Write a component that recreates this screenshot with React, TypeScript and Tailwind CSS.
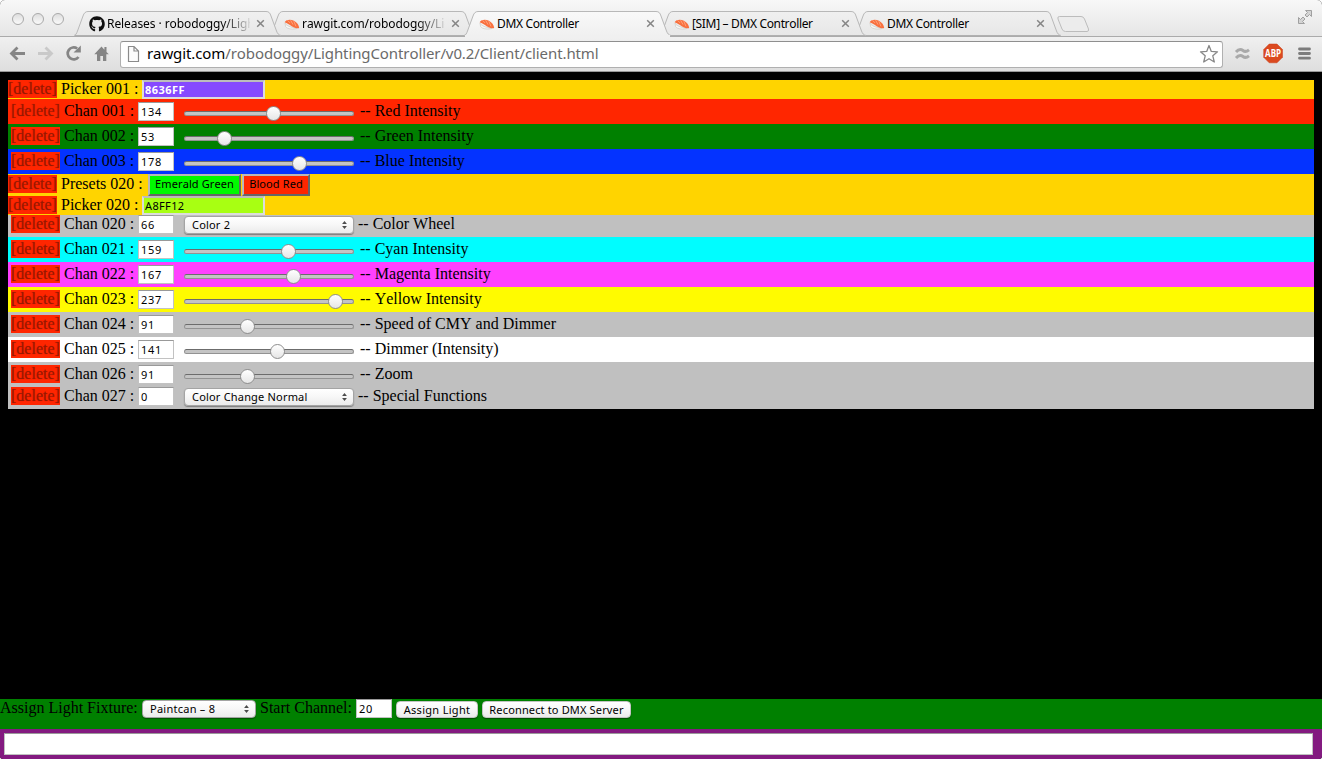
import React from "react";
import { FaGithub } from "react-icons/fa";

const SANS = "font-['Noto_Sans',sans-serif]";

function Sushi() {
  return (
    <svg width="16" height="16" viewBox="0 0 16 16" className="shrink-0">
      <path d="M1 7.2 C2.5 9.5 6 11.5 13.2 12.4 C11 13.4 3 13.5 1.6 10.5 Z" fill="#f7f7f4" stroke="#c4c4c0" strokeWidth=".6" />
      <path d="M0.6 6.2 C2 3.6 6.5 3 10 4.8 C13 6.4 14.8 9 15.2 12 C12 12.8 8.5 11 6 9 C4.2 7.8 2.6 7 0.6 6.2 Z" fill="#f9703e" />
      <path d="M3.6 4.4 L6 6.9 M6.6 4.2 L9 8.6 M9.8 5.2 L12 10.4" stroke="#ffb795" strokeWidth=".7" fill="none" />
    </svg>
  );
}

type TabProps = { title: string; active?: boolean; github?: boolean; fade?: boolean; z: string; spacing: string };

function Tab({ title, active, github, fade, z, spacing }: TabProps) {
  return (
    <div className={`relative ${z} -mr-[12px] h-[25px] w-[207px] shrink-0`}>
      <svg width="207" height="26" viewBox="0 0 207 26" className="absolute left-0 top-0">
        <defs>
          <linearGradient id="tabfill" x1="0" y1="0" x2="0" y2="1">
            <stop offset="0" stopColor="#f0f0f0" />
            <stop offset="1" stopColor="#e7e7e7" />
          </linearGradient>
          <linearGradient id="tabactive" x1="0" y1="0" x2="0" y2="1">
            <stop offset="0" stopColor="#f9f9f9" />
            <stop offset="1" stopColor="#f0f0f0" />
          </linearGradient>
        </defs>
        <path
          d="M0 24.5 C2 24 2.5 22.5 3.5 20 L9 5 C10 2 11.5 0.5 14 0.5 H192 C195 0.5 196 2 197 5 L202.5 20 C203.5 22.5 204.5 24 207 24.5"
          fill={active ? "url(#tabactive)" : "url(#tabfill)"}
          stroke="#b8b8b8"
        />
        <path d="M1 25 H206" stroke={active ? "#f0f0f0" : "#b0b0b0"} strokeWidth={active ? 2 : 1} transform={active ? "" : "translate(0,-0.5)"} />
      </svg>
      <div className="relative flex h-[25px] items-center pl-[15px]">
        {github ? <FaGithub size={16} color="#111" className="shrink-0" /> : <Sushi />}
        <div className={`ml-[2px] h-[20px] w-[143px] whitespace-nowrap text-[12px] leading-[20px] text-black ${spacing} ${SANS} ${fade ? "[mask-image:linear-gradient(to_right,#000_115px,transparent_146px)]" : ""}`}>
          {title}
        </div>
        <svg width="9" height="9" viewBox="0 0 9 9" className="ml-[6px]">
          <path d="M1.2 1.2 L7.8 7.8 M7.8 1.2 L1.2 7.8" stroke="#858585" strokeWidth="1.5" />
        </svg>
      </div>
    </div>
  );
}

function BrowserChrome() {
  return (
    <header className="h-[72px]">
      <div className="flex h-[36px] bg-linear-to-b from-[#f8f8f8] to-[#e6e6e6] pt-[11px]">
        <div className="flex w-[74px] gap-[8px] pl-[12px] pt-[2px]">
          {[0, 1, 2].map((i) => (
            <span key={i} className="size-[12px] rounded-full border border-[#a9a9a9] bg-linear-to-b from-[#dedede] to-[#fafafa]" />
          ))}
        </div>
        <Tab title="Releases · robodoggy/Ligh" github fade z="z-[3]" spacing="tracking-[-0.08px]" />
        <Tab title="rawgit.com/robodoggy/Lig" fade z="z-[2]" spacing="tracking-[-0.08px]" />
        <Tab title="DMX Controller" active z="z-[5]" spacing="tracking-[-0.34px]" />
        <Tab title="[SIM] – DMX Controller" z="z-[3]" spacing="tracking-[-0.34px]" />
        <Tab title="DMX Controller" z="z-[2]" spacing="tracking-[-0.34px]" />
        <svg width="34" height="18" viewBox="0 0 34 18" className="ml-[7px] mt-[4px]">
          <path d="M3.5 1.5 H25 Q27.5 1.5 28.5 4 L32.5 14 Q33 16.5 31 16.5 H9.5 Q7 16.5 6 14 L2 4 Q1.2 1.5 3.5 1.5 Z" fill="#ececec" stroke="#bcbcbc" />
        </svg>
        <svg width="16" height="16" viewBox="0 0 16 16" className="ml-auto mr-[9px] -mt-[2px]">
          <path d="M8.5 1.5 H14.5 V7.5 L12.5 5.5 L10 8 L8 6 L10.5 3.5 Z M1.5 8.5 L3.5 10.5 L6 8 L8 10 L5.5 12.5 L7.5 14.5 H1.5 Z" fill="#d4d4d4" stroke="#a0a0a0" strokeWidth="1" />
        </svg>
      </div>
      <div className="flex h-[36px] items-center border-y border-t-[#ababab] border-b-[#989898] bg-linear-to-b from-[#f0f0f0] to-[#dedede]">
        <svg width="120" height="34" viewBox="0 0 120 34" fill="none">
          <path d="M25 16.5 H12 M17.5 10.5 L11.5 16.5 L17.5 22.5" stroke="#858585" strokeWidth="2.8" />
          <path d="M38 16.5 H51 M45.5 10.5 L51.5 16.5 L45.5 22.5" stroke="#c9c9c9" strokeWidth="2.8" />
          <path d="M78.5 20 A6 6 0 1 1 77.2 11.5" stroke="#858585" strokeWidth="2.7" />
          <path d="M80.8 8.5 V15.5 H73.5 Z" fill="#858585" />
          <path d="M101.5 9.5 L94.3 17.3 H97 V24 H100.3 V19 H103 V24 H106.3 V17.3 H108.8 L106.5 15 V10 H104.4 V12.7 Z" fill="#858585" />
        </svg>
        <div className="flex h-[27px] w-[1103px] items-center rounded-[3px] border border-[#b0b0b0] border-t-[#8f8f8f] bg-white">
          <svg width="26" height="24" viewBox="0 0 26 24">
            <path d="M7.5 4.5 H13 L17.5 9 V19.5 H7.5 Z M13 4.5 V9 H17.5" fill="#fcfcfc" stroke="#8b8b8b" strokeWidth="1.2" />
          </svg>
          <div className={`flex-1 -mt-[2px] whitespace-nowrap text-[15px] tracking-[-0.1px] text-[#6a6a6a] ${SANS}`}>
            <span className="text-black">rawgit.com</span>/robodoggy/LightingController/v0.2/Client/client.html
          </div>
          <svg width="20" height="20" viewBox="0 0 20 20" className="mr-[3px]">
            <path d="M10 1.5 L12.3 7.4 L18.5 7.8 L13.8 11.8 L15.3 18 L10 14.7 L4.7 18 L6.2 11.8 L1.5 7.8 L7.7 7.4 Z" fill="#fff" stroke="#888" strokeWidth="1.3" strokeLinejoin="round" />
          </svg>
        </div>
        <svg width="99" height="34" viewBox="0 0 99 34">
          <path d="M13 15 C16 11.5 18 12 20 13.5 C22 15 23.5 14.8 26 12.8 M13 21 C16 17.5 18 18 20 19.5 C22 21 23.5 20.8 26 18.8" fill="none" stroke="#a9a9a9" strokeWidth="3" />
          <path d="M46.2 7 H54 L59.5 12.5 V20.3 L54 25.8 H46.2 L40.7 20.3 V12.5 Z" fill="#db4a20" stroke="#c93f18" strokeWidth=".5" />
          <text x="50.1" y="20.2" textAnchor="middle" textLength="16" lengthAdjust="spacingAndGlyphs" className="font-['Open_Sans',sans-serif] text-[10.5px] font-bold" fill="#fff">ABP</text>
          <path d="M76.5 12 H86.5 M76.5 16.5 H86.5 M76.5 21.2 H86.5" stroke="#7c7c7c" strokeWidth="2.8" strokeLinecap="round" />
        </svg>
      </div>
    </header>
  );
}

function Delete() {
  return <span className="h-[18px] w-[49px] shrink-0 bg-[#ff2600] leading-[18px] text-[#961800] [text-shadow:0_0_1px_rgba(143,21,0,.45)]">[delete]</span>;
}

function NumberBox({ value }: { value: string }) {
  return (
    <span className={`flex h-[19px] w-[36px] shrink-0 items-center border border-[#c2c2c2] border-t-[#999] bg-white pl-[2px] pt-[2px] text-[11px] tracking-[0.7px] text-black ${SANS}`}>
      {value}
    </span>
  );
}

function Select({ label, width }: { label: string; width: string }) {
  return (
    <span className={`flex shrink-0 items-center justify-between rounded-[4px] border border-[#a4a4a4] bg-linear-to-b from-white via-[#f7f7f7] to-[#ebebeb] pl-[7px] pr-[5px] text-[11px] leading-[14px] text-black shadow-[0_1px_1px_rgba(0,0,0,.35)] ${width} ${SANS}`}>
      {label}
      <svg width="7" height="10" viewBox="0 0 7 10">
        <path d="M3.5 1 L5.9 4 H1.1 Z M3.5 9 L5.9 6 H1.1 Z" fill="#4c4c4c" />
      </svg>
    </span>
  );
}

function Slider({ value }: { value: number }) {
  return (
    <span className="relative mt-[9px] h-[5px] w-[170px] shrink-0 rounded-[3px] border border-[#929292] border-t-[#6c6c6c] bg-[#c4c4c4]">
      <span
        className="absolute -top-[6px] size-[15px] rounded-full border border-[#8e8e8e] bg-linear-to-b from-white to-[#e6e6e6]"
        style={{ left: (155 * value) / 255 - 0.7 }}
      />
    </span>
  );
}

type Channel = { id: string; value: number; name: string; bg: string; option?: string };

function ChannelRow({ id, value, name, bg, option }: Channel) {
  return (
    <div className={`flex items-start pl-[3px] ${bg} ${option ? "h-[22px]" : "h-[25px] pt-[3px]"}`}>
      <Delete />
      <span className="w-[78px] shrink-0 pl-[4px] leading-[18px]">Chan {id} :</span>
      <NumberBox value={String(value)} />
      <span className="w-[10px] shrink-0" />
      {option ? (
        <span className="mt-[1px] flex tracking-[0.19px]"><Select label={option} width="h-[18px] w-[170px]" /></span>
      ) : (
        <Slider value={value} />
      )}
      <span className={`leading-[18px] ${option ? "pl-[4px]" : "pl-[6px]"}`}>-- {name}</span>
    </div>
  );
}

function PickerRow({ id, hex, color }: { id: string; hex: string; color: string }) {
  return (
    <div className="flex h-[19px] items-start bg-[#ffd400]">
      <Delete />
      <span className="w-[85px] shrink-0 pl-[4px] leading-[18px]">Picker {id} :</span>
      <span className={`flex h-[19px] w-[123px] items-center border-2 border-[#dcdcdc] border-t-[#bcbcbc] pl-[1px] pt-[2px] text-[11px] ${color} ${SANS}`}>{hex}</span>
    </div>
  );
}

const first: Channel[] = [
  { id: "001", value: 134, name: "Red Intensity", bg: "bg-[#ff2600]" },
  { id: "002", value: 53, name: "Green Intensity", bg: "bg-[#008000]" },
  { id: "003", value: 178, name: "Blue Intensity", bg: "bg-[#0433ff]" },
];

const second: Channel[] = [
  { id: "020", value: 66, name: "Color Wheel", bg: "bg-[#c0c0c0]", option: "Color 2" },
  { id: "021", value: 159, name: "Cyan Intensity", bg: "bg-[#00fdff]" },
  { id: "022", value: 167, name: "Magenta Intensity", bg: "bg-[#ff40ff]" },
  { id: "023", value: 237, name: "Yellow Intensity", bg: "bg-[#fffb00]" },
  { id: "024", value: 91, name: "Speed of CMY and Dimmer", bg: "bg-[#c0c0c0]" },
  { id: "025", value: 141, name: "Dimmer (Intensity)", bg: "bg-white" },
  { id: "026", value: 91, name: "Zoom", bg: "bg-[#c0c0c0]" },
  { id: "027", value: 0, name: "Special Functions", bg: "bg-[#c0c0c0]", option: "Color Change Normal" },
];

function PushButton({ label, width }: { label: string; width: string }) {
  return (
    <button className={`h-[17px] shrink-0 whitespace-nowrap rounded-[4px] border border-[#c4c4c4] bg-linear-to-b from-white via-[#f7f7f7] to-[#ebebeb] text-center text-[11px] leading-[13px] text-black shadow-[0_1px_1px_rgba(0,0,0,.4)] ${width} ${SANS}`}>
      {label}
    </button>
  );
}

export default function App() {
  return (
    <div className="h-[759px] w-[1322px] overflow-hidden bg-white">
      <div className="flex h-[759px] flex-col overflow-hidden rounded-t-[5px] rounded-b-[3px] bg-black font-['Liberation_Serif',serif] text-[16px] text-black [font-kerning:none]">
        <BrowserChrome />
        <main className="flex-1 whitespace-nowrap px-[8px] pt-[8px]">
          <PickerRow id="001" hex="8636FF" color="bg-[#864aff] font-bold text-white tracking-[0.45px]" />
          {first.map((c) => <ChannelRow key={c.id} {...c} />)}
          <div className="flex h-[22px] items-start bg-[#ffd400]">
            <span className="mt-[1px] flex"><Delete /></span>
            <span className="w-[91px] shrink-0 pl-[4px] leading-[20px]">Presets 020 :</span>
            <button className={`h-[22px] w-[93px] border-2 border-[#b8b8b8] border-r-[#666] border-b-[#666] bg-[#00f900] pb-[2px] text-[11px] leading-[16px] tracking-[0.1px] ${SANS}`}>Emerald Green</button>
            <button className={`ml-px h-[22px] w-[68px] border-2 border-[#b8b8b8] border-r-[#666] border-b-[#666] bg-[#ff2600] pb-[2px] text-[11px] leading-[16px] tracking-[0.1px] ${SANS}`}>Blood Red</button>
          </div>
          <PickerRow id="020" hex="A8FF12" color="bg-[#a8ff12] text-black tracking-[0.35px]" />
          {second.map((c) => <ChannelRow key={c.id} {...c} />)}
        </main>
        <footer className="shrink-0">
          <div className="flex h-[30px] items-start whitespace-nowrap bg-[#008000]">
            <span className="w-[142px] leading-[18px]">Assign Light Fixture:</span>
            <span className="mt-[1px] flex tracking-[0.25px]"><Select label="Paintcan – 8" width="h-[18px] w-[114px] pl-[6px]" /></span>
            <span className="w-[100px] pl-[4px] leading-[18px]">Start Channel:</span>
            <NumberBox value="20" />
            <span className="mt-[2px] flex gap-[4px] pl-[4px] tracking-[0.2px]">
              <PushButton label="Assign Light" width="w-[82px] tracking-[0.3px]" />
              <PushButton label="Reconnect to DMX Server" width="w-[149px] tracking-[0.15px]" />
            </span>
          </div>
          <div className="h-[30px] bg-[#831a80] pl-[4px] pt-[4px]">
            <div className="h-[22px] w-[1309px] border border-[#c0c0c0] border-t-[#999] bg-white" />
          </div>
        </footer>
      </div>
    </div>
  );
}
